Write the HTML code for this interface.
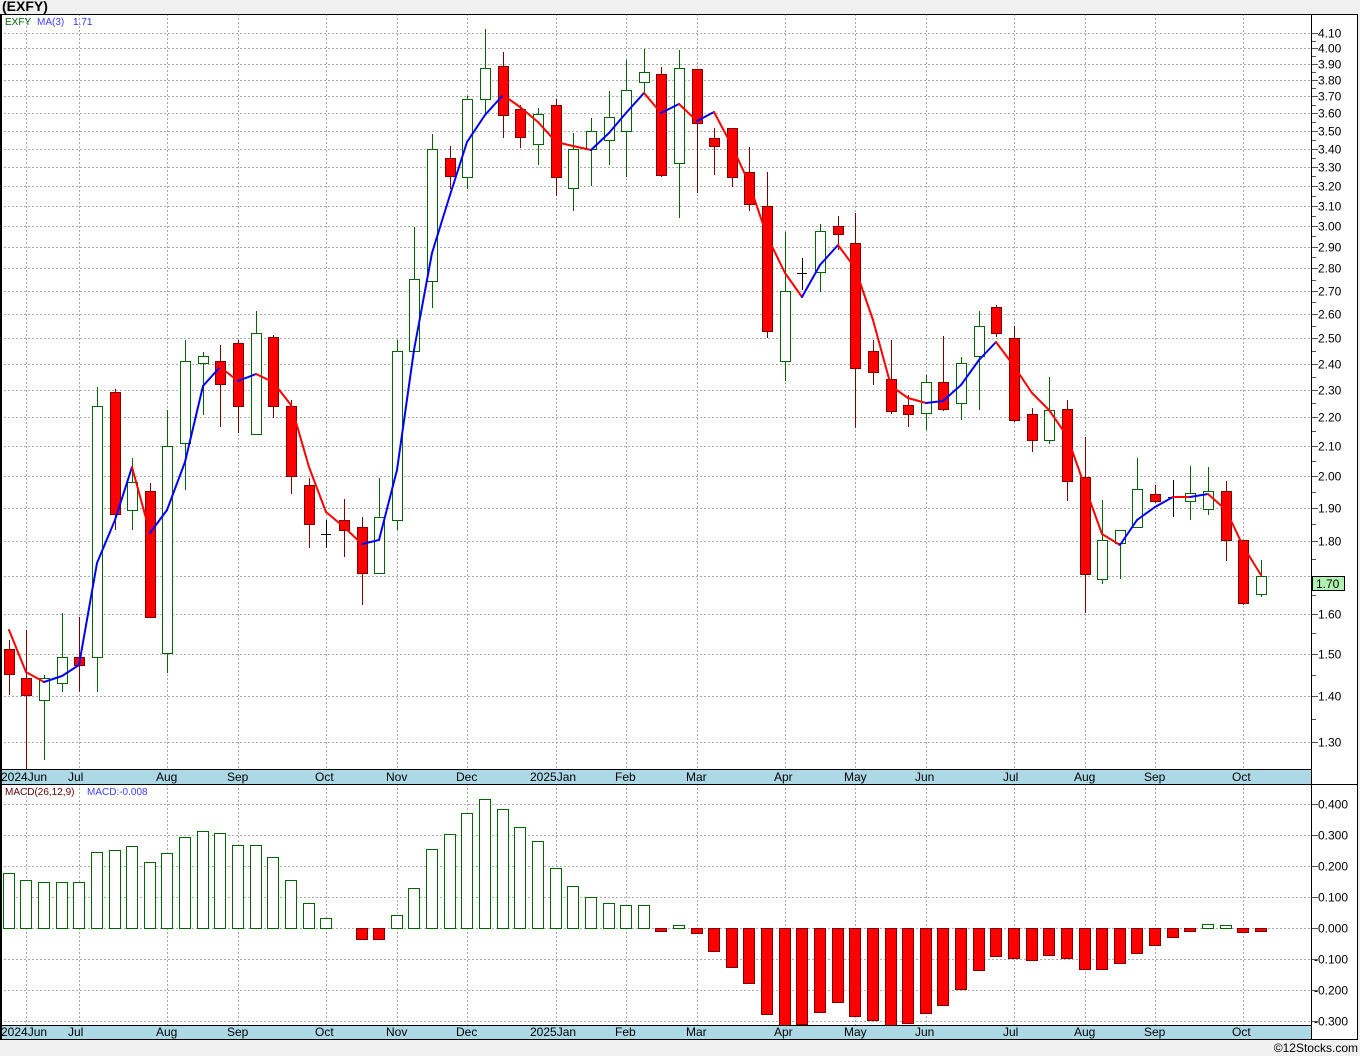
<!DOCTYPE html>
<html><head><meta charset="utf-8"><style>
body{margin:0;background:#f0f0f0;width:1360px;height:1056px;overflow:hidden;font-family:"Liberation Sans",sans-serif}
svg{position:absolute;left:0;top:0}
</style></head><body>
<svg id="s" width="1360" height="1056" xmlns="http://www.w3.org/2000/svg" font-family="Liberation Sans, sans-serif"></svg>
<script>
const C=[[9,640,695,649,674,'r'],[26,630,770,678,695,'r'],[44,675,760,678,700,'g'],[62,613,692,657,683,'g'],[79,617,692,657,665,'r'],[97,387,692,406,657,'g'],[115,389,530,392,514,'r'],[132,458,530,482,510,'g'],[150,483,617,491,617,'r'],[167,410,673,446,653,'g'],[185,340,490,361,443,'g'],[203,352,415,356,363,'g'],[220,345,427,361,384,'r'],[238,340,433,343,406,'r'],[256,311,434,333,434,'g'],[273,335,418,337,406,'r'],[291,400,494,406,476,'r'],[309,478,548,485,524,'r'],[326,520,548,534,534,'d'],[344,499,557,520,530,'r'],[362,517,605,527,573,'r'],[379,478,573,517,573,'g'],[397,340,530,351,520,'g'],[414,227,321,279,351,'g'],[432,134,308,149,281,'g'],[450,146,189,158,176,'r'],[467,96,189,99,177,'g'],[485,29,113,68,99,'g'],[503,52,138,66,115,'r'],[520,105,148,109,137,'r'],[538,108,165,114,144,'g'],[556,99,196,105,177,'r'],[573,133,211,149,188,'g'],[591,118,186,131,149,'g'],[609,91,165,117,140,'g'],[626,60,177,90,131,'g'],[644,49,93,72,82,'g'],[661,67,177,74,175,'r'],[679,50,218,68,163,'g'],[697,69,193,69,123,'r'],[714,128,175,138,146,'r'],[732,128,187,128,177,'r'],[749,147,211,172,204,'r'],[767,172,338,206,331,'r'],[785,232,381,291,361,'g'],[802,258,290,273,273,'d'],[820,224,292,231,272,'g'],[838,216,250,226,234,'r'],[855,213,428,243,368,'r'],[873,340,385,351,372,'r'],[891,340,414,379,411,'r'],[908,395,427,405,414,'r'],[926,375,430,382,413,'g'],[943,336,411,382,409,'r'],[961,357,420,363,403,'g'],[979,311,410,326,356,'g'],[996,305,337,307,333,'r'],[1014,326,422,338,420,'r'],[1032,408,452,414,440,'r'],[1049,377,444,410,440,'g'],[1067,400,501,409,481,'r'],[1085,437,613,477,574,'r'],[1102,500,584,540,579,'g'],[1120,530,579,530,543,'g'],[1137,458,528,489,527,'g'],[1155,485,503,494,501,'r'],[1173,480,517,497,497,'d'],[1190,466,520,493,501,'g'],[1208,467,515,491,509,'g'],[1226,481,561,491,540,'r'],[1243,540,605,540,603,'r'],[1261,560,597,576,594,'g']];
const MA=[630,672,682,676,665,563,520,467,533,510,462,386,367,381,374,382,405,467,512,527,544,540,470,350,253,195,142,115,95,107,122,142,146,150,133,113,93,113,104,121,112,146,183,236,273,297,265,245,268,320,386,398,403,401,385,360,342,366,393,410,436,487,534,545,520,507,497,497,494,510,546,575];
const M=[873,880,882,882,882,852,850,846,862,853,837,831,833,845,845,857,880,903,918,928,939,939,915,888,849,834,813,799,809,827,841,868,886,897,903,905,905,931,925,933,951,967,983,1014,1025,1024,1012,1002,1016,1020,1025,1023,1013,1005,989,970,956,958,960,955,958,969,969,963,953,945,937,931,924,925,932,931];
const mon=[[27,'2024Jun'],[79,'Jul'],[167,'Aug'],[238,'Sep'],[326,'Oct'],[397,'Nov'],[467,'Dec'],[556,'2025Jan'],[626,'Feb'],[697,'Mar'],[785,'Apr'],[855,'May'],[926,'Jun'],[1014,'Jul'],[1085,'Aug'],[1155,'Sep'],[1243,'Oct']];
let h='';
const yp=p=>904-617.3*Math.log(p);
h+='<rect x="0" y="14" width="1358" height="1026" fill="#fff"/>';
h+='<rect x="0" y="770" width="1312" height="14" fill="#add8e6"/><rect x="0" y="1025" width="1312" height="15" fill="#add8e6"/>';
const prices=[1.3,1.4,1.5,1.6,1.7,1.8,1.9,2.0,2.1,2.2,2.3,2.4,2.5,2.6,2.7,2.8,2.9,3.0,3.1,3.2,3.3,3.4,3.5,3.6,3.7,3.8,3.9,4.0,4.1];
prices.forEach(p=>{const y=Math.round(yp(p))+.5;h+=`<line x1="0" x2="1312" y1="${y}" y2="${y}" stroke="#aaa" stroke-dasharray="2,2"/><line x1="1312" x2="1318" y1="${y}" y2="${y}" stroke="#555"/>`;if(!(p==1.7))h+=`<text x="1318" y="${y+4}" font-size="12" fill="#000">${p.toFixed(2)}</text>`;});
for(let i=0;i<prices.length-1;i++){const y=Math.round(yp((prices[i]+prices[i+1])/2))+.5;h+=`<line x1="1312" x2="1316" y1="${y}" y2="${y}" stroke="#555"/>`;}
[0.4,0.3,0.2,0.1,0,-0.1,-0.2,-0.3].forEach(v=>{const y=Math.round(928-v*310)+.5;h+=`<line x1="0" x2="1312" y1="${y}" y2="${y}" stroke="#aaa" stroke-dasharray="2,2"/><line x1="1312" x2="1318" y1="${y}" y2="${y}" stroke="#555"/><text x="${v<0?1314:1318}" y="${y+4}" font-size="12">${v.toFixed(3)}</text>`;});
mon.forEach(m=>{const x=(m[0]===27?26:m[0])+.5;h+=`<line x1="${x}" x2="${x}" y1="14" y2="770" stroke="#aaa" stroke-dasharray="2,2"/><line x1="${x}" x2="${x}" y1="784" y2="1025" stroke="#aaa" stroke-dasharray="2,2"/>`;
const tx=m[1].length>3?m[0]-26:m[0]-11;h+=`<text x="${tx}" y="781" font-size="12" fill="#000">${m[1]}</text><text x="${tx}" y="1036" font-size="12" fill="#000">${m[1]}</text>`;});
C.forEach(c=>{const[x,hi,lo,t,b,k]=c;const X=x+.5;
if(k==='d'){h+=`<line x1="${X}" x2="${X}" y1="${hi}" y2="${lo}" stroke="#000"/><line x1="${x-5}" x2="${x+5}" y1="${t+.5}" y2="${t+.5}" stroke="#000"/>`;return;}
const col=k==='r'?'#800000':'#006400';h+=`<line x1="${X}" x2="${X}" y1="${hi}" y2="${lo}" stroke="${col}"/>`;
h+=`<rect x="${x-4.5}" y="${t+.5}" width="10" height="${Math.max(b-t,1)}" fill="${k==='r'?'#f00':'#fff'}" stroke="${col}"/>`;});
for(let i=0;i<MA.length-1;i++){const c=MA[i+1]<MA[i]?'#0000ff':'#ff0000';h+=`<line x1="${C[i][0]}" y1="${MA[i]}" x2="${C[i+1][0]}" y2="${MA[i+1]}" stroke="${c}" stroke-width="2" stroke-linecap="round"/>`;}
M.forEach((y,i)=>{const x=C[i][0];if(y===928)return;const up=y<928;h+=`<rect x="${x-5.5}" y="${(up?y:928)+.5}" width="11" height="${Math.abs(928-y)}" fill="${up?'#fff':'#f00'}" stroke="${up?'#006400':'#800000'}"/>`;});
h+='<rect x="1.5" y="14.5" width="1310" height="1025" fill="none" stroke="#000"/><line x1="0.5" x2="0.5" y1="14" y2="1040" stroke="#000"/>';
h+='<line x1="0" x2="1358" y1="14.5" y2="14.5" stroke="#000"/><line x1="1357.5" x2="1357.5" y1="14" y2="1040" stroke="#000"/><line x1="0" x2="1358" y1="1039.5" y2="1039.5" stroke="#000"/>';
h+='<line x1="0" x2="1312" y1="769.5" y2="769.5" stroke="#000"/><line x1="0" x2="1358" y1="784.5" y2="784.5" stroke="#000"/><line x1="0" x2="1312" y1="1025.5" y2="1025.5" stroke="#000"/>';
h+='<rect x="1312.5" y="576.5" width="32" height="14" fill="#b0f0b0" stroke="#000"/><text x="1316" y="588" font-size="12">1.70</text>';
h+='<text x="2" y="11" font-size="14" font-weight="bold">(EXFY)</text>';
h+='<text x="5" y="25" font-size="10" fill="#006400">EXFY</text><text x="37" y="25" font-size="10" fill="#4040ff">MA(3)</text><text x="73" y="25" font-size="10" fill="#3030ff">1.71</text>';
h+='<text x="5" y="795" font-size="10" fill="#600000">MACD(26,12,9)</text><text x="87" y="795" font-size="10" fill="#4040ff">MACD:-0.008</text>';
h+='<text x="1358" y="1052" font-size="12" text-anchor="end">©12Stocks.com</text>';
document.getElementById('s').innerHTML=h;
</script>
</body></html>
